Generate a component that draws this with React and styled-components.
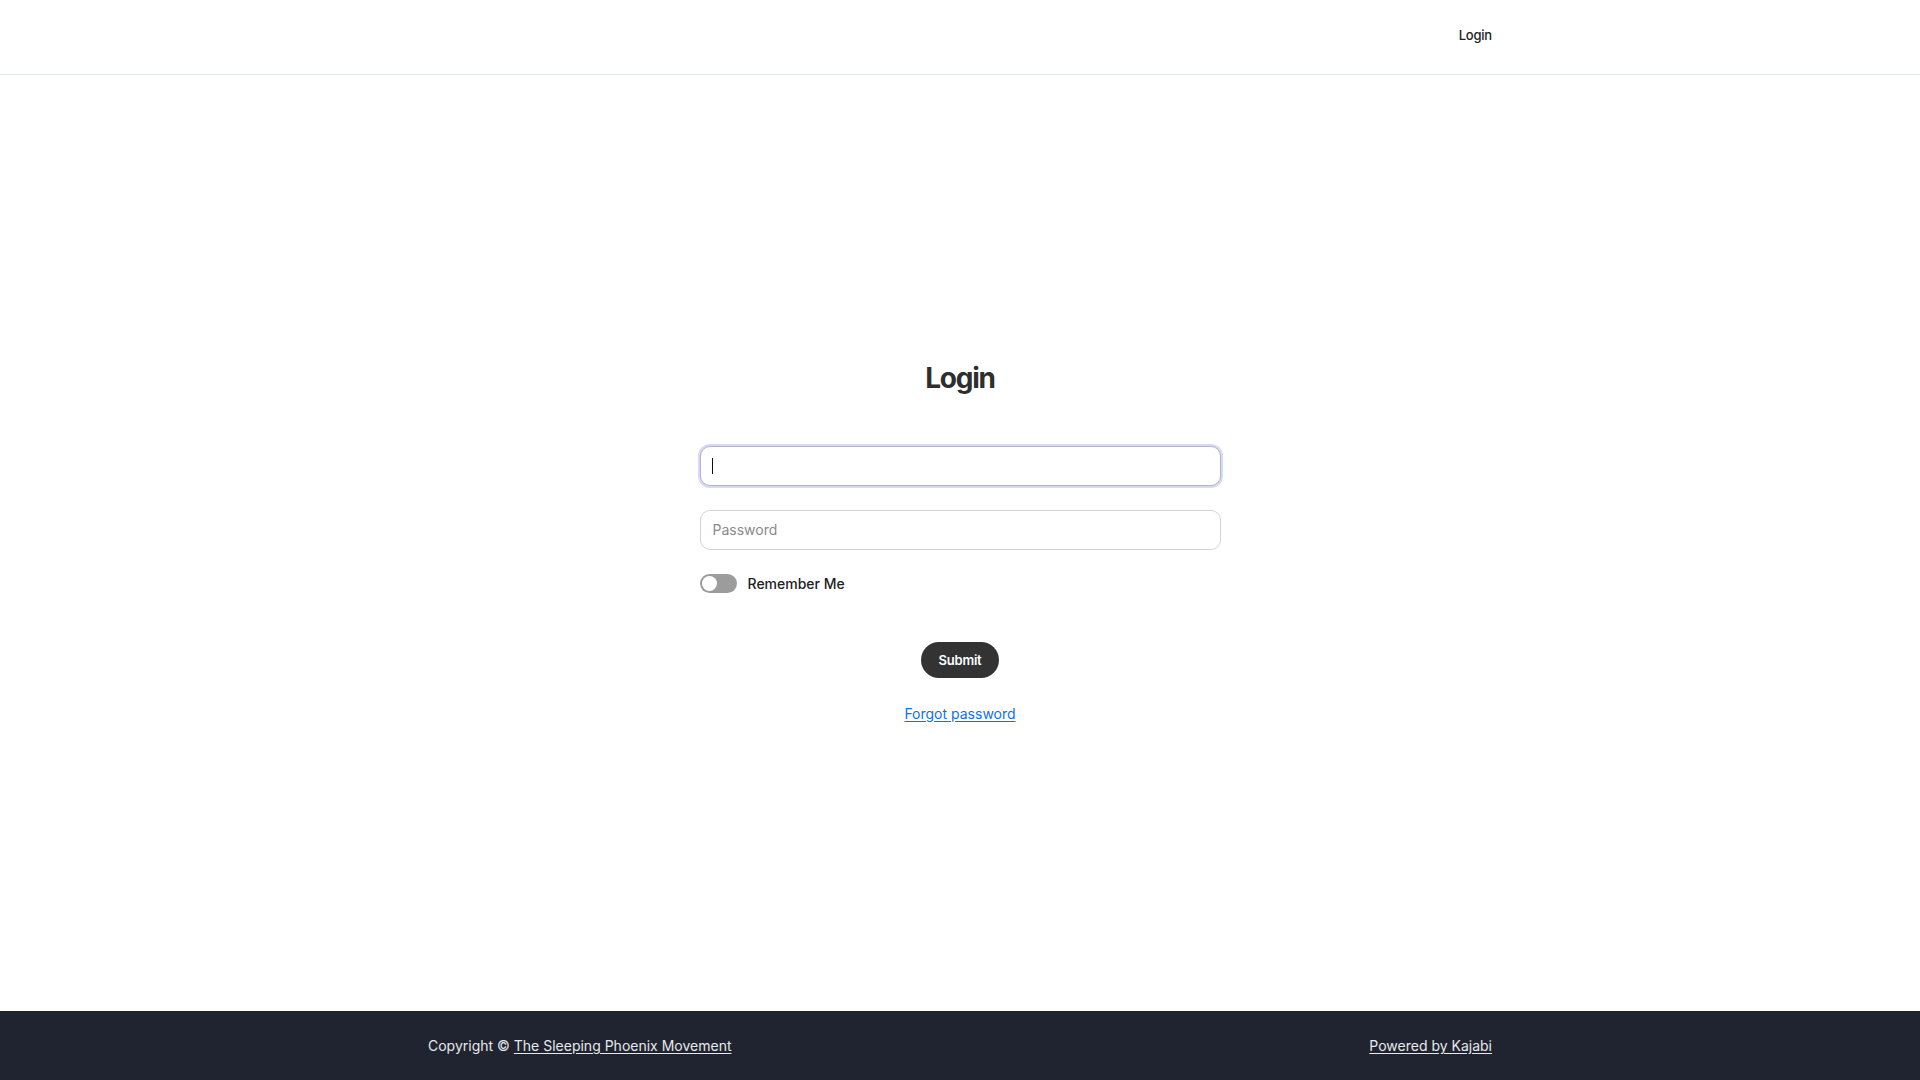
import React, { useState } from 'react';
import styled, { createGlobalStyle } from 'styled-components';

const GlobalStyle = createGlobalStyle`
  html, body {
    margin: 0;
    padding: 0;
    background: #ffffff;
    font-family: Inter, "Liberation Sans", sans-serif;
    color: #222222;
  }
  * {
    box-sizing: border-box;
  }
`;

const Page = styled.div`
  min-height: 100vh;
  display: flex;
  flex-direction: column;
`;

const Header = styled.header`
  height: 75px;
  border-bottom: 1px solid #e2e6ef;
  display: flex;
  align-items: center;
  justify-content: center;
`;

const HeaderInner = styled.div`
  width: 1064px;
  display: flex;
  justify-content: flex-end;
  padding-bottom: 4px;
`;

const NavLink = styled.a`
  font-size: 13px;
  font-weight: 500;
  letter-spacing: -0.2px;
  color: #222222;
  text-decoration: none;
`;

const Main = styled.main`
  flex: 1;
  display: flex;
  align-items: center;
  justify-content: center;
`;

const Form = styled.form`
  width: 521px;
  display: flex;
  flex-direction: column;
  align-items: center;
  padding-bottom: 4px;
`;

const Title = styled.h1`
  margin: 0 0 51px;
  font-size: 28px;
  line-height: 34px;
  font-weight: 700;
  color: #2e2e2e;
  letter-spacing: -1.2px;
`;

const InputWrap = styled.div`
  position: relative;
  width: 100%;
  margin-bottom: 24px;
`;

const Input = styled.input`
  display: block;
  width: 100%;
  height: 40px;
  padding: 0 12px;
  border: 1px solid ${props => (props.$focused ? '#b4b4c0' : '#d4d4d4')};
  border-radius: 10px;
  font-family: inherit;
  font-size: 14px;
  color: #222222;
  outline: none;
  box-shadow: ${props => (props.$focused ? '0 0 0 2px #d6daf8' : 'none')};

  &::placeholder {
    color: #8a8a8a;
  }
`;

const Caret = styled.span`
  position: absolute;
  left: 12px;
  top: 12px;
  width: 1px;
  height: 16px;
  background: #111111;
  pointer-events: none;
`;

const ToggleRow = styled.label`
  align-self: stretch;
  height: 19px;
  display: flex;
  align-items: center;
  gap: 11px;
  cursor: pointer;
`;

const Track = styled.span`
  position: relative;
  width: 37px;
  height: 19px;
  border-radius: 10px;
  background: ${props => (props.$on ? '#333333' : '#9c9c9c')};
  flex-shrink: 0;
`;

const Knob = styled.span`
  position: absolute;
  top: 2px;
  left: ${props => (props.$on ? '20px' : '2px')};
  width: 15px;
  height: 15px;
  border-radius: 50%;
  background: #ffffff;
`;

const ToggleLabel = styled.span`
  font-size: 14px;
  font-weight: 500;
  color: #222222;
`;

const SubmitButton = styled.button`
  margin-top: 49px;
  height: 36px;
  padding: 0 17px;
  border: none;
  border-radius: 18px;
  background: #333333;
  color: #ffffff;
  font-family: inherit;
  font-size: 13px;
  font-weight: 600;
  letter-spacing: -0.2px;
  cursor: pointer;
`;

const ForgotLink = styled.a`
  display: block;
  margin-top: 27px;
  font-size: 14px;
  line-height: 17px;
  color: #0a72ef;
  text-decoration: underline;
  text-underline-offset: 2px;
`;

const Footer = styled.footer`
  height: 69px;
  background: #1f2430;
  display: flex;
  align-items: center;
  justify-content: center;
`;

const FooterInner = styled.div`
  width: 1064px;
  display: flex;
  justify-content: space-between;
  align-items: center;
  font-size: 14px;
  color: #e8e8ea;
`;

const FooterLink = styled.a`
  color: #e8e8ea;
  text-decoration: underline;
  text-underline-offset: 2px;
`;

export default function App() {
  const [remember, setRemember] = useState(false);
  const [email, setEmail] = useState('');

  return (
    <Page>
      <GlobalStyle />
      <Header>
        <HeaderInner>
          <NavLink href="#">Login</NavLink>
        </HeaderInner>
      </Header>
      <Main>
        <Form onSubmit={e => e.preventDefault()}>
          <Title>Login</Title>
          <InputWrap>
            <Input
              type="email"
              $focused
              value={email}
              onChange={e => setEmail(e.target.value)}
            />
            {email === '' && <Caret />}
          </InputWrap>
          <InputWrap>
            <Input type="password" placeholder="Password" />
          </InputWrap>
          <ToggleRow onClick={() => setRemember(!remember)}>
            <Track $on={remember}>
              <Knob $on={remember} />
            </Track>
            <ToggleLabel>Remember Me</ToggleLabel>
          </ToggleRow>
          <SubmitButton type="submit">Submit</SubmitButton>
          <ForgotLink href="#">Forgot password</ForgotLink>
        </Form>
      </Main>
      <Footer>
        <FooterInner>
          <span>
            Copyright © <FooterLink href="#">The Sleeping Phoenix Movement</FooterLink>
          </span>
          <FooterLink href="#">Powered by Kajabi</FooterLink>
        </FooterInner>
      </Footer>
    </Page>
  );
}
